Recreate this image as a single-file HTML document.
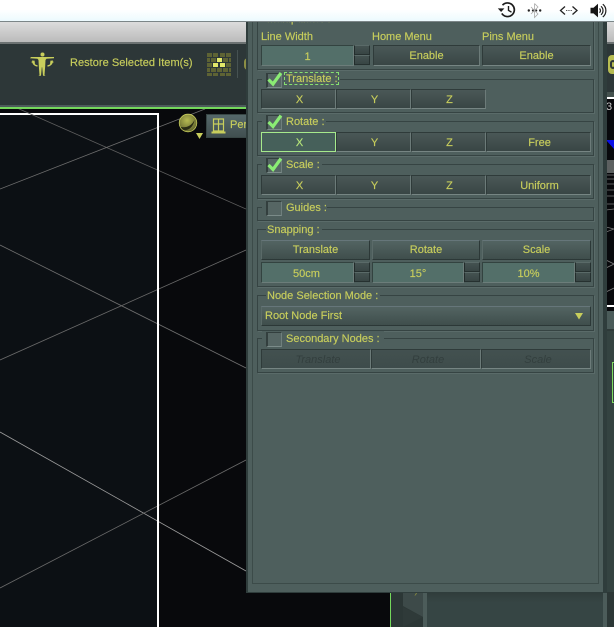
<!DOCTYPE html>
<html><head><meta charset="utf-8">
<style>
html,body{margin:0;padding:0;width:614px;height:627px;overflow:hidden;background:#08090c}
body{position:relative;font-family:"Liberation Sans",sans-serif;font-size:11px;color:#c8ce5c;-webkit-text-stroke:.15px #c8ce5c}
div,span{position:absolute;box-sizing:border-box;white-space:nowrap}
.t{line-height:16px}
.g{border:1px solid #364443;box-shadow:1px 1px 0 #5a6b69}
.l{background:#4e5f5d;padding:0 2px 0 1px;height:14px;line-height:16px}
.b{background:linear-gradient(#4a5857,#394645);border-top:1px solid #2f3b3a;border-left:1px solid #2f3b3a;border-right:1px solid #6c7b79;border-bottom:1px solid #768583;text-align:center;line-height:20px}
.p{padding-left:2px}
.r{background:linear-gradient(#536462,#3f4e4c);border-top-color:#66767a;border-left-color:#5a6a68;border-right-color:#2c3837;border-bottom-color:#2c3837;line-height:18px}
.i{background:#536f69;border-top:1px solid #334340;border-left:1px solid #334340;border-right:1px solid #6c7d7a;border-bottom:1px solid #6c7d7a;text-align:center;line-height:22px}
.s{background:linear-gradient(#445251,#384544);border:1px solid #263130;border-top-color:#5a6a68;border-left-color:#222c2b}
.c{width:16px;height:15px;background:#566664;border-top:1px solid #333f3e;border-left:2px solid #333f3e;border-right:1px solid #6f7f7d;border-bottom:1px solid #7b8b89}
.d{color:#333f3e;-webkit-text-stroke:0;font-style:italic;background:linear-gradient(#435150,#3e4c4b);padding-left:4px}
</style></head><body>

<!-- menu bar -->
<div style="left:0;top:0;width:614px;height:21px;background:linear-gradient(#fff 0,#fff 45%,#ecfafe 100%)"></div>
<svg style="position:absolute;left:495px;top:0" width="119" height="21" viewBox="0 0 119 21">
 <g fill="none" stroke="#1c1c1c" stroke-width="1.7">
  <path d="M7.500 5.200A6.800 6.800 0 1 1 6.800 13.400"/>
  <path d="M13.500 6v4.400l3 1.800" stroke-width="1.400"/>
 </g>
 <path d="M2.800 8.400h6.600l-3.300 3.600z" fill="#1c1c1c"/>
 <g fill="none" stroke="#aaa" stroke-width=".8"><path d="M39.500 3.500v14l3.500-3.500-7-7M39.500 3.500l3.500 3.500-7 7"/></g>
 <g fill="#222"><circle cx="33.800" cy="10.500" r="1.200"/><circle cx="37.800" cy="10.500" r="1"/><circle cx="41.300" cy="10.500" r="1"/><circle cx="45.200" cy="10.500" r="1.200"/></g>
 <g fill="none" stroke="#222" stroke-width="1.300"><path d="M70 6.500l-4.500 4 4.500 4M77.500 6.500l4.500 4-4.500 4"/></g>
 <g fill="#555"><rect x="71" y="10" width="1.300" height="1"/><rect x="73.300" y="10" width="1.300" height="1"/><rect x="75.600" y="10" width="1.300" height="1"/></g>
 <path d="M95.500 7.800h3l4.500-4v13.600l-4.500-4h-3z" fill="#151515"/>
 <g fill="none" stroke="#1c1c1c" stroke-width="1.200"><path d="M104.500 8.500a2.800 2.800 0 0 1 0 4.200M106 6.300a5.500 5.500 0 0 1 0 8.500M107.800 4.200a8.200 8.200 0 0 1 0 12.800"/></g>
</svg>
<div style="left:0;top:21px;width:614px;height:1px;background:#7c8688"></div>

<!-- title gradient -->
<div style="left:0;top:22px;width:614px;height:21px;background:linear-gradient(#dcdcdc,#b9b9b9)"></div>
<div style="left:0;top:42px;width:614px;height:2px;background:#6c7272"></div>

<!-- toolbar -->
<div style="left:0;top:44px;width:614px;height:61px;background:#2d3738"></div>
<div style="left:0;top:105px;width:614px;height:2px;background:#4c5a5a"></div>
<div style="left:0;top:107px;width:246px;height:2px;background:#74d85c"></div>

<svg style="position:absolute;left:30px;top:51px" width="26" height="26" viewBox="0 0 26 26" fill="#c8ce5c">
 <circle cx="12.500" cy="3.500" r="2"/>
 <path d="M1 6h23v1.200l-7.500.6-1 1.200-.3 6-.7 9 1 .8h-2.500l-.8-8.500h-.4l-.8 8.500h-2.500l1-.8-.7-9-.3-6-1-1.200-7.500-.6z"/>
 <path d="M3 9.500c-.5 3 1.500 5 4.500 5.500M22 9.500c.5 3-1.500 5-4.500 5.500" fill="none" stroke="#c8ce5c" stroke-width="1.500"/>
 <path d="M1 11l3.500-1.500L5 13zM24 11l-3.500-1.500L20 13z"/>
</svg>
<div class="t" style="left:70px;top:55px;letter-spacing:.04px">Restore Selected Item(s)</div>

<svg style="position:absolute;left:207px;top:53px" width="24" height="23">
 <g fill="#5e6334">
  <rect x="0" y="0" width="5" height="4"/><rect x="6" y="0" width="5" height="4"/><rect x="13" y="0" width="5" height="4"/><rect x="19" y="0" width="5" height="4"/>
  <rect x="0" y="5" width="3" height="4"/><rect x="4" y="5" width="5" height="4"/><rect x="16" y="5" width="5" height="4"/><rect x="22" y="5" width="2" height="4"/>
  <rect x="0" y="10" width="5" height="4"/><rect x="19" y="10" width="5" height="4"/>
  <rect x="0" y="15" width="3" height="4"/><rect x="4" y="15" width="5" height="4"/><rect x="10" y="15" width="5" height="4"/><rect x="16" y="15" width="5" height="4"/><rect x="22" y="15" width="2" height="4"/>
  <rect x="0" y="20" width="5" height="3"/><rect x="6" y="20" width="5" height="3"/><rect x="13" y="20" width="5" height="3"/><rect x="19" y="20" width="5" height="3"/>
 </g>
 <g fill="#e2e86a">
  <rect x="10" y="5" width="5" height="4"/><rect x="6" y="10" width="5" height="4"/><rect x="13" y="10" width="5" height="4"/>
 </g>
</svg>
<div style="left:237px;top:50px;width:1px;height:28px;background:#465252"></div>
<div style="left:244px;top:58px;width:8px;height:12px;background:#8c8f45;border-radius:6px"></div>

<!-- viewport -->
<div style="left:0;top:109px;width:246px;height:518px;background:#08090c"></div>
<div style="left:0;top:113px;width:159px;height:514px;background:#0c1014;border-top:2px solid #fff;border-right:2px solid #fff"></div>
<svg style="position:absolute;left:0;top:109px" width="246" height="518" viewBox="0 109 246 518" fill="none" stroke-width=".8">
 <path d="M17 108L246 209" stroke="#5e5e5e"/>
 <path d="M0 189L205 109" stroke="#6e6e6e"/>
 <path d="M0 245L246 368" stroke="#6e6e6e"/>
 <path d="M0 360L246 250" stroke="#6a6a6a"/>
 <path d="M0 432L246 571" stroke="#9c9c9c"/>
 <path d="M0 588L246 460" stroke="#6a6a6a"/>
 <path d="M158 113V627" stroke="#fff" stroke-width="2"/>
</svg>

<!-- sphere + view button -->
<svg style="position:absolute;left:178px;top:113px" width="26" height="26">
 <defs><radialGradient id="q" cx=".45" cy=".35" r=".7"><stop offset="0" stop-color="#b5b952"/><stop offset="1" stop-color="#5c5f2b"/></radialGradient></defs>
 <circle cx="10" cy="10" r="8.800" fill="url(#q)" stroke="#c8ce5c" stroke-width=".8"/>
 <path d="M2.500 14c6 1 11-1 14-7-1 7-7 12-12 9.500z" fill="#2a2c15"/>
 <path d="M18 20h7l-3.500 6z" fill="#c8ce5c"/>
</svg>
<div style="left:206px;top:114px;width:42px;height:24px;background:linear-gradient(#55686a,#414f50);border:1px solid #384645"></div>
<svg style="position:absolute;left:211px;top:118px" width="16" height="17" fill="none" stroke="#c8ce5c" stroke-width="1.200">
 <path d="M2.500 1v12h10V1zM2.500 6h10M7.500 1v12"/><path d="M.5 14.500h14" stroke-width="2"/>
</svg>
<div class="t" style="left:230px;top:117px">Per</div>

<!-- right side -->
<div style="left:606px;top:44px;width:8px;height:50px;background:#2d3738"></div>
<div style="left:608px;top:55px;width:8px;height:19px;background:#b8bd52;border-radius:4px 0 0 4px"></div>
<div style="left:610px;top:60px;width:6px;height:9px;border:2px solid #2d3738;border-radius:4px"></div>
<div style="left:606px;top:92px;width:8px;height:6px;background:#45524f"></div>
<div style="left:606px;top:97px;width:8px;height:214px;background:#08090c"></div>
<div style="left:606px;top:97px;width:8px;height:2px;background:#fff"></div>
<div style="left:606px;top:101px;font-size:11px;color:#ccc;-webkit-text-stroke:0;line-height:13px">3</div>
<svg style="position:absolute;left:606px;top:138px" width="8" height="12"><path d="M0 2h8v9z" fill="#0a10e8"/></svg>
<div style="left:606px;top:160px;width:8px;height:13px;background:#5c6060"></div>
<svg style="position:absolute;left:606px;top:172px" width="8" height="130" fill="none" stroke="#7a7a7a" stroke-width=".8">
 <path d="M0 3h8M0 7h8M0 12h8M0 18h8M0 24h8M0 32h8M0 38l8-1M0 55l8 2M0 60l8-3M0 88l8 4M0 96l8-4M0 120l8-4"/>
</svg>
<div style="left:606px;top:305px;width:8px;height:2px;background:#fff"></div>
<div style="left:606px;top:311px;width:8px;height:316px;background:#344341"></div>
<div style="left:606px;top:311px;width:8px;height:18px;background:#4a5b59"></div>
<div style="left:606px;top:329px;width:8px;height:2px;background:#2e3a39"></div>
<div style="left:612px;top:362px;width:2px;height:41px;border-left:1px solid #7fdc62;border-top:1px solid #7fdc62;border-bottom:1px solid #7fdc62"></div>

<!-- bottom under panel -->
<div style="left:390px;top:592px;width:224px;height:35px;background:#2c3736"></div>
<div style="left:390px;top:592px;width:1px;height:35px;background:#74d85c"></div>
<svg style="position:absolute;left:403px;top:592px" width="20" height="35">
 <path d="M0 0h20v25L0 14z" fill="#3d4a49"/>
 <path d="M0 15L20 25 0 35z" fill="#2f3a39"/>
</svg>
<div style="left:405px;top:592px;width:15px;height:6px;overflow:hidden"><div style="left:2px;top:-9px;font-size:11px;line-height:14px;color:#8a8d3f;-webkit-text-stroke:0">S)</div></div>
<div style="left:423px;top:592px;width:4px;height:35px;background:#4c5c5a"></div>
<div style="left:427px;top:592px;width:177px;height:35px;background:linear-gradient(#2f3c3b,#364544 30%)"></div>
<div style="left:603px;top:592px;width:4px;height:35px;background:#4c5c5a"></div>

<!-- panel -->
<div style="left:246px;top:22px;width:361px;height:571px;background:#2f3d3c"></div>
<div style="left:248px;top:22px;width:355px;height:570px;background:#4e5f5d"></div>
<div style="left:252px;top:22px;width:347px;height:562px;border-left:1px solid #3c4b49;border-right:1px solid #3c4b49;border-bottom:1px solid #3c4b49"></div>

<!-- manipulator -->
<div class="g" style="left:257px;top:20px;width:337px;height:50px;clip-path:inset(2px -2px -2px -2px)"></div>
<div style="left:266px;top:22px;width:70px;height:3px;overflow:hidden;background:#4e5f5d"><div class="t" style="left:1px;top:-11px">Manipulator :</div></div>
<div class="t" style="left:261px;top:29px">Line Width</div>
<div class="t" style="left:372px;top:29px">Home Menu</div>
<div class="t" style="left:482px;top:29px">Pins Menu</div>
<div class="i" style="left:261px;top:45px;width:93px;height:21px">1</div>
<div class="s" style="left:354px;top:45px;width:16px;height:10px"></div>
<div class="s" style="left:354px;top:55px;width:16px;height:10px"></div>
<div class="b" style="left:373px;top:45px;width:107px;height:21px;line-height:21px">Enable</div>
<div class="b" style="left:482px;top:45px;width:109px;height:21px;line-height:21px">Enable</div>

<!-- translate -->
<div class="g" style="left:257px;top:79px;width:337px;height:34px"></div>
<div class="l" style="left:262px;top:72px;width:78px"></div>
<div class="c" style="left:266px;top:73px"></div>
<div style="left:284px;top:72px;width:55px;height:13px;border:1px dashed #86e070"></div>
<div class="t" style="left:286px;top:71px">Translate :</div>
<div class="b p" style="left:261px;top:89px;width:75px;height:20px">X</div>
<div class="b p" style="left:336px;top:89px;width:75px;height:20px">Y</div>
<div class="b p" style="left:411px;top:89px;width:75px;height:20px">Z</div>

<!-- rotate -->
<div class="g" style="left:257px;top:121px;width:337px;height:35px"></div>
<div class="l" style="left:262px;top:114px;width:64px"></div>
<div class="c" style="left:266px;top:115px"></div>
<div class="t" style="left:286px;top:114px">Rotate :</div>
<div class="b p" style="left:261px;top:132px;width:75px;height:20px;border:1px solid #a6ea8c;background:#46605a;color:#b6e67a;-webkit-text-stroke:.15px #b6e67a">X</div>
<div class="b p" style="left:336px;top:132px;width:75px;height:20px">Y</div>
<div class="b p" style="left:411px;top:132px;width:75px;height:20px">Z</div>
<div class="b p" style="left:486px;top:132px;width:105px;height:20px">Free</div>

<!-- scale -->
<div class="g" style="left:257px;top:164px;width:337px;height:35px"></div>
<div class="l" style="left:262px;top:157px;width:60px"></div>
<div class="c" style="left:266px;top:158px"></div>
<div class="t" style="left:286px;top:157px">Scale :</div>
<div class="b p" style="left:261px;top:175px;width:75px;height:20px">X</div>
<div class="b p" style="left:336px;top:175px;width:75px;height:20px">Y</div>
<div class="b p" style="left:411px;top:175px;width:75px;height:20px">Z</div>
<div class="b p" style="left:486px;top:175px;width:105px;height:20px">Uniform</div>

<!-- checks -->
<svg style="position:absolute;left:266px;top:70px;overflow:visible" width="20" height="100" fill="none" stroke="#8aec74" stroke-width="3.200">
 <path d="M2.500 9.500l4.500 4.500 8-11"/>
 <path d="M2.500 52l4.500 4.500 8-11"/>
 <path d="M2.500 95l4.500 4.500 8-11"/>
</svg>

<!-- guides -->
<div class="g" style="left:257px;top:207px;width:337px;height:14px"></div>
<div class="l" style="left:262px;top:200px;width:65px"></div>
<div class="c" style="left:266px;top:201px"></div>
<div class="t" style="left:286px;top:200px">Guides :</div>

<!-- snapping -->
<div class="g" style="left:257px;top:229px;width:337px;height:58px"></div>
<div class="l" style="left:266px;top:222px">Snapping :</div>
<div class="b r" style="left:261px;top:240px;width:109px;height:20px">Translate</div>
<div class="b r" style="left:372px;top:240px;width:108px;height:20px">Rotate</div>
<div class="b r" style="left:482px;top:240px;width:109px;height:20px">Scale</div>
<div class="i" style="left:261px;top:262px;width:93px;height:21px;padding-right:2px">50cm</div>
<div class="s" style="left:354px;top:262px;width:16px;height:10px"></div>
<div class="s" style="left:354px;top:272px;width:16px;height:10px"></div>
<div class="i" style="left:372px;top:262px;width:92px;height:21px">15°</div>
<div class="s" style="left:464px;top:262px;width:16px;height:10px"></div>
<div class="s" style="left:464px;top:272px;width:16px;height:10px"></div>
<div class="i" style="left:482px;top:262px;width:93px;height:21px">10%</div>
<div class="s" style="left:575px;top:262px;width:16px;height:10px"></div>
<div class="s" style="left:575px;top:272px;width:16px;height:10px"></div>

<!-- node selection -->
<div class="g" style="left:257px;top:295px;width:337px;height:36px"></div>
<div class="l" style="left:266px;top:288px">Node Selection Mode :</div>
<div class="b r" style="left:261px;top:306px;width:330px;height:20px;text-align:left;padding-left:3px">Root Node First</div>
<svg style="position:absolute;left:575px;top:313px" width="9" height="7"><path d="M0 0h8l-4 6.500z" fill="#c8ce5c"/></svg>

<!-- secondary -->
<div class="g" style="left:257px;top:338px;width:337px;height:35px"></div>
<div class="l" style="left:262px;top:331px;width:122px"></div>
<div class="c" style="left:266px;top:332px"></div>
<div class="t" style="left:286px;top:331px">Secondary Nodes :</div>
<div class="b d" style="left:261px;top:349px;width:110px;height:20px">Translate</div>
<div class="b d" style="left:371px;top:349px;width:110px;height:20px">Rotate</div>
<div class="b d" style="left:481px;top:349px;width:110px;height:20px">Scale</div>

</body></html>
